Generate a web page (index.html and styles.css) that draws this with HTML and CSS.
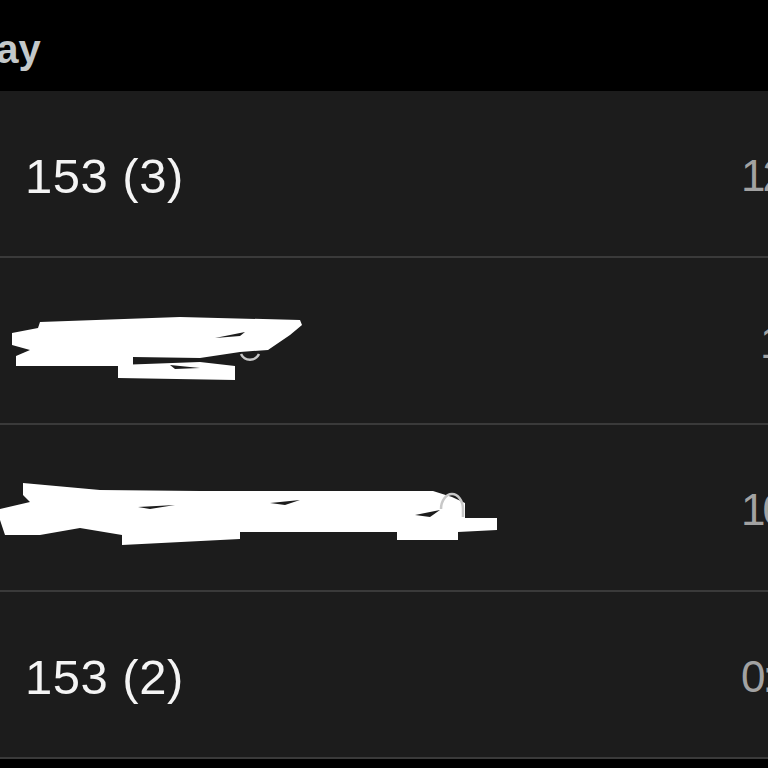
FILE: index.html
```html
<!DOCTYPE html>
<html lang="en">
  <head>
    <meta charset="UTF-8" />
    <meta name="viewport" content="width=device-width, initial-scale=1.0" />
    <title>Recents</title>
    <link rel="stylesheet" href="styles.css">
  </head>
  <body>
    <header class="day-header">
      <h2>Today</h2>
    </header>

    <ul class="calls">
      <li class="call">
        <span class="name">153 (3)</span>
        <span class="time">12:41</span>
      </li>

      <li class="call">
        <span class="name"></span>
        <span class="time short">1:05</span>
        <!-- redacted contact -->
        <svg class="scribble" viewBox="0 0 768 165" width="768" height="165">
          <path class="ghost" d="M241,96 A10,10 0 0 0 259,96" />
          <polygon points="12,75 38,70 40,64 180,59 300,62 302,67 290,77 268,92 240,94 200,100 133,99 133,108 16,108 16,98 30,92 12,87" />
          <polygon points="118,107 200,104 235,108 235,122 118,120" />
          <polygon class="gap" points="215,80 245,74 240,78" />
          <polygon class="gap" points="170,107 200,110 175,111" />
        </svg>
      </li>

      <li class="call">
        <span class="name"></span>
        <span class="time">10:12</span>
        <svg class="scribble" viewBox="0 0 768 165" width="768" height="165">
          <polygon points="23,58 100,65 200,66 433,66 452,72 465,78 465,93 497,93 497,105 458,107 458,115 397,115 397,107 240,107 240,114 122,120 122,110 80,103 40,110 5,110 0,95 0,84 30,77 23,70" />
          <path class="ghost" d="M441,84 A11,15 0 0 1 463,84 L463,92" />
          <polygon class="gap" points="270,78 300,75 285,80" />
          <polygon class="gap" points="415,90 440,85 430,92" />
          <polygon class="gap" points="138,82 175,80 150,84" />
        </svg>
      </li>

      <li class="call">
        <span class="name">153 (2)</span>
        <span class="time">0:30</span>
      </li>
    </ul>
  </body>
</html>
```

FILE: styles.css
```css
:root {
  --bg-color: #000;
  --row-color: #1c1c1c;
  --line-color: #3a3a3a;
  --text-color: #f4f4f4;
  --muted-color: #a2a2a2;
}
* {
  margin: 0;
  padding: 0;
  box-sizing: border-box;
}
body {
  font-family: "Liberation Sans", Arial, sans-serif;
  background-color: var(--bg-color);
  color: var(--text-color);
  width: 768px;
  height: 768px;
  overflow: hidden;
}
.day-header {
  height: 91px;
  padding-top: 29px;
  overflow: hidden;
}
.day-header h2 {
  font-size: 40px;
  line-height: 40px;
  font-weight: bold;
  color: #c3c8ca;
  margin-left: -74px;
}
.calls {
  list-style: none;
  background-color: var(--row-color);
}
.call {
  position: relative;
  height: 167px;
  display: flex;
  align-items: center;
  padding-top: 4px;
  border-bottom: 2px solid var(--line-color);
  overflow: hidden;
}
.name {
  flex: 1;
  padding-left: 25px;
  font-size: 49px;
  letter-spacing: 0.5px;
}
.time {
  width: 27px;
  font-size: 44px;
  letter-spacing: -3px;
  color: var(--muted-color);
  white-space: nowrap;
}
.time.short {
  padding-left: 19px;
}
.scribble {
  position: absolute;
  top: 0;
  left: 0;
}
.scribble polygon {
  fill: #fff;
}
.scribble .gap {
  fill: var(--row-color);
}
.scribble .ghost {
  fill: none;
  stroke: #c8c8c8;
  stroke-width: 2.5;
}
```
